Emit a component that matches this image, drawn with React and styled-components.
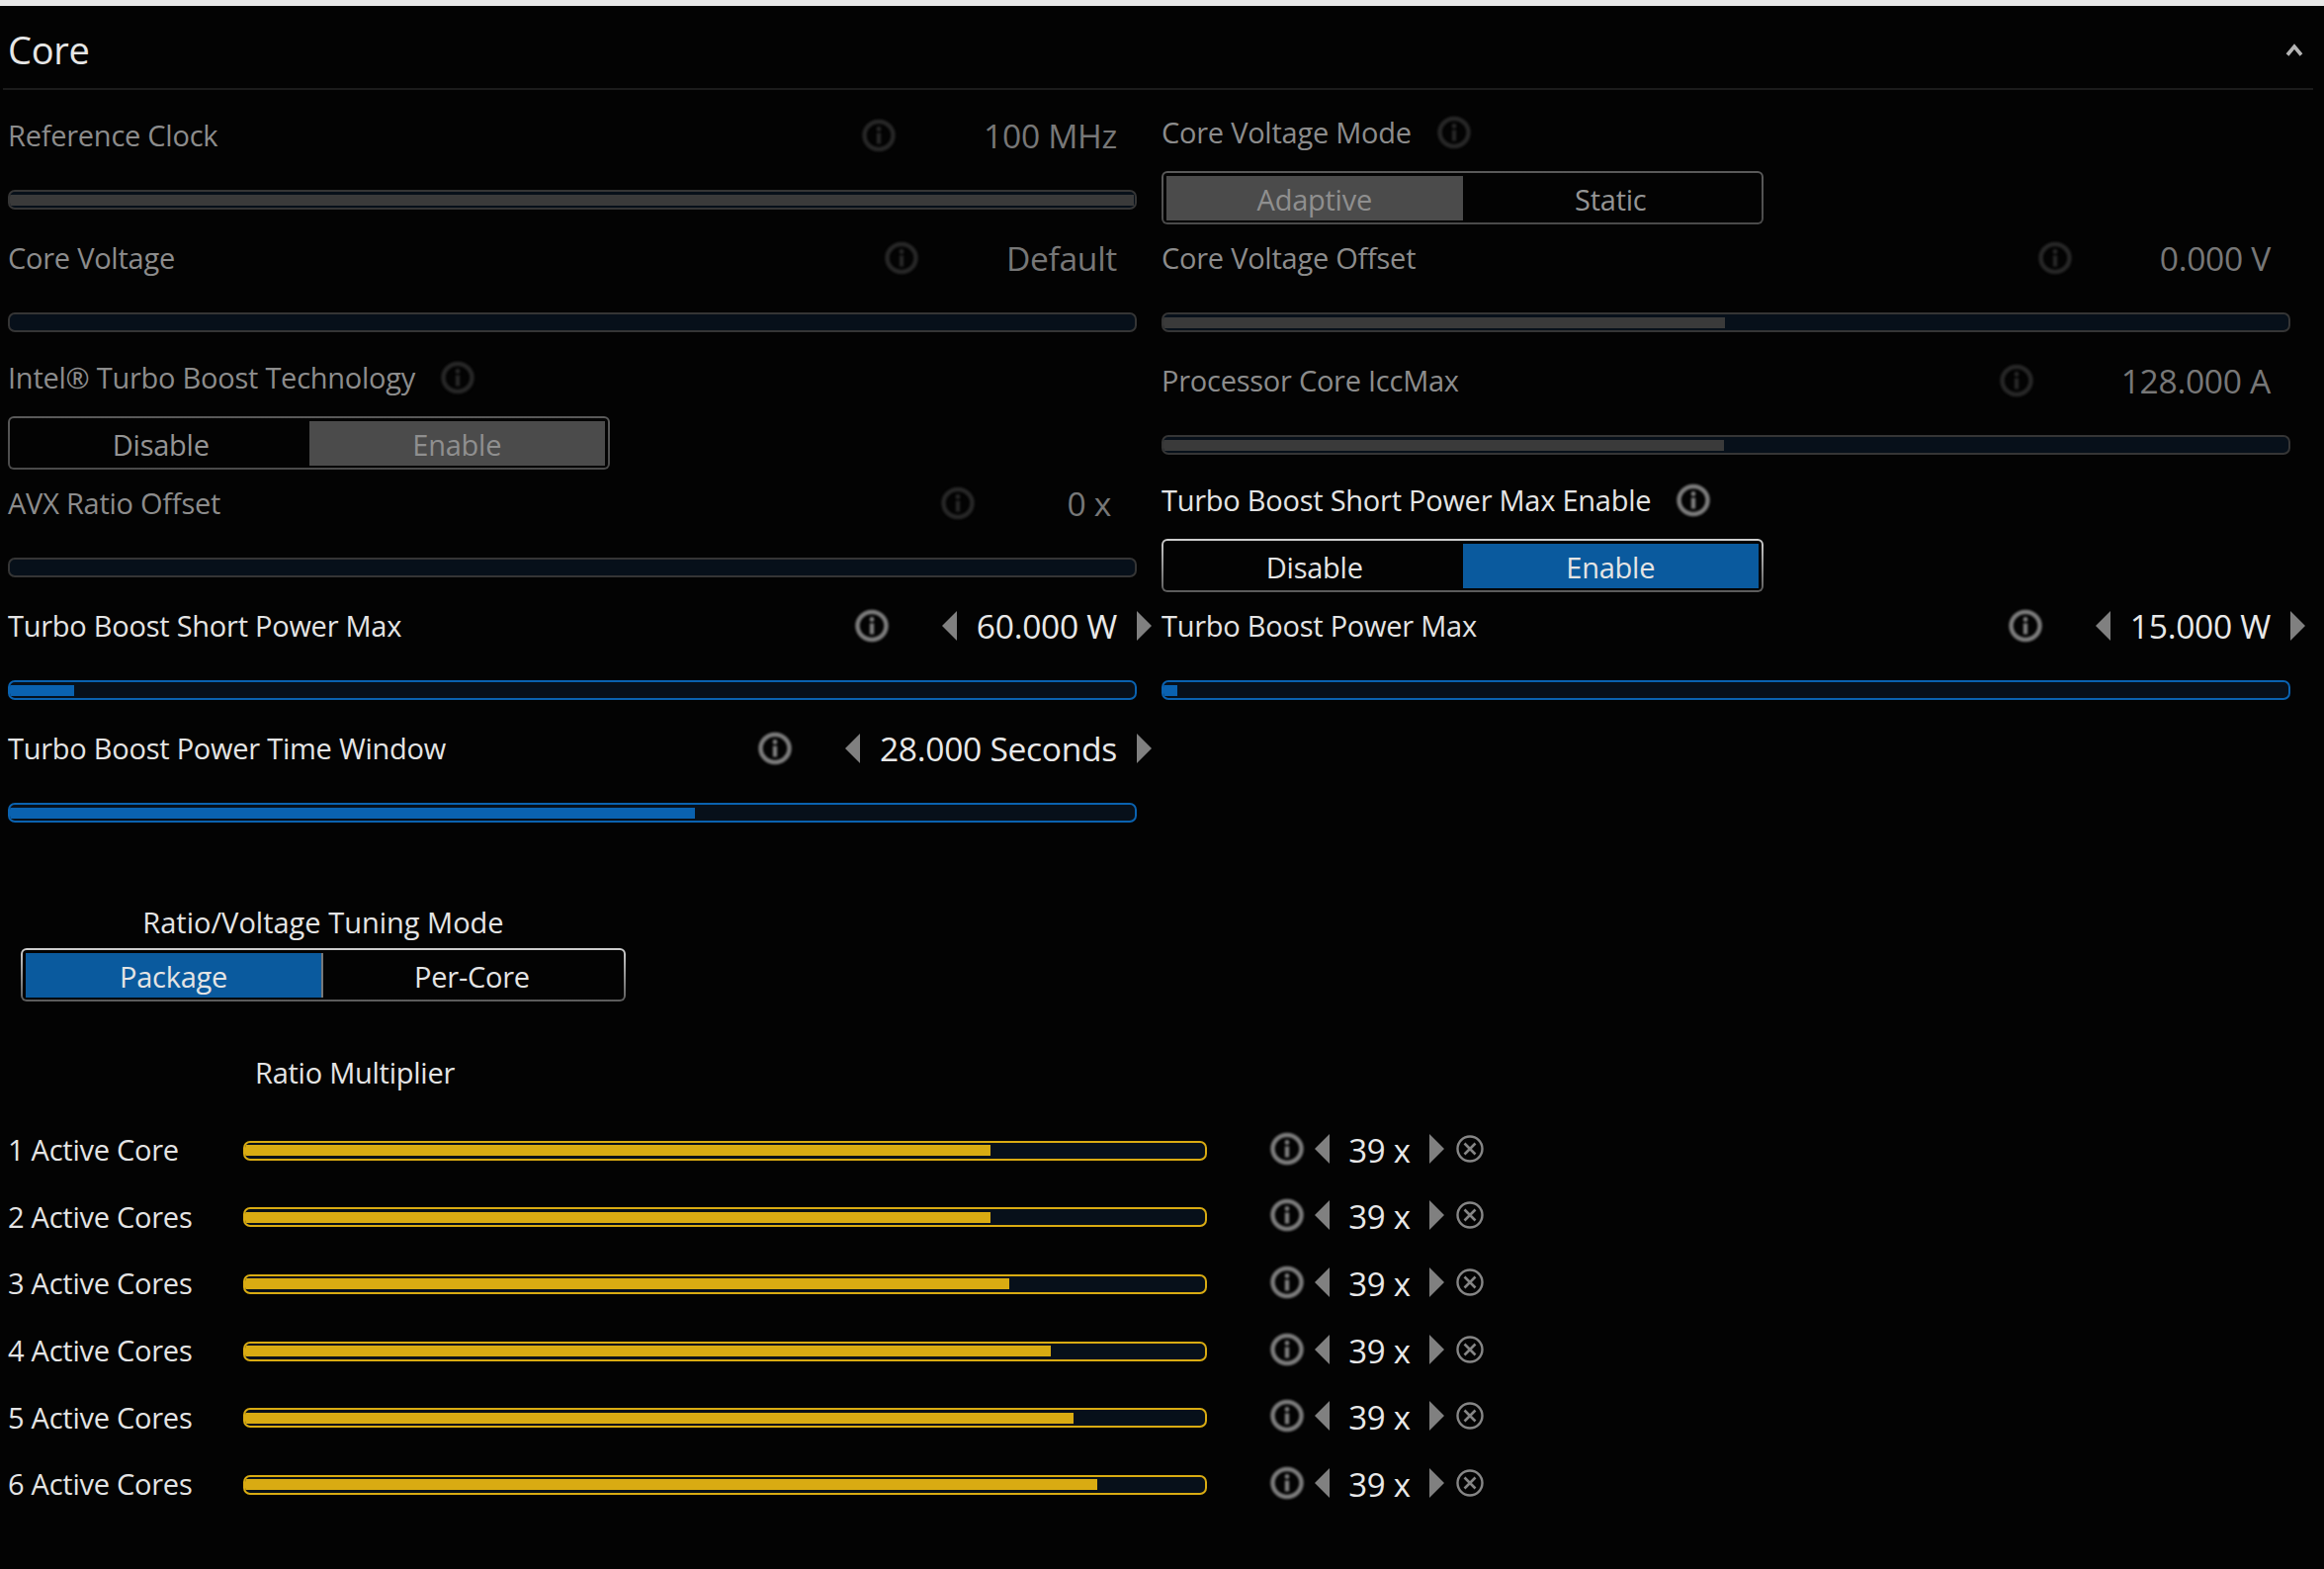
import React from 'react';
import styled, { createGlobalStyle } from 'styled-components';

const GlobalStyle = createGlobalStyle`
  html, body {
    margin: 0;
    padding: 0;
    background: #030303;
  }
  body {
    font-family: "Open Sans", "Noto Sans", "Liberation Sans", sans-serif;
    letter-spacing: -0.25px;
  }
`

const Page = styled.div`
  width: 2351px;
  height: 1587px;
  overflow: hidden;
  background: #030303;
  border-top: 6px solid #e8e8e8;
  box-sizing: border-box;
`
const PanelHeader = styled.div`
  display: flex;
  align-items: center;
  justify-content: space-between;
  height: 85px;
  margin: 0 11px 0 3px;
  padding: 4px 10px 0 5px;
  border-bottom: 2px solid #1b1b1b;
  box-sizing: border-box;
`
const Title = styled.h2`
  margin: 0;
  font-size: 38px;
  font-weight: 400;
  letter-spacing: -0.3px;
  color: #e6e6e6;
`
const Chevron = styled.svg`
  display: block;
  filter: blur(0.5px);
`
const SettingsGrid = styled.div`
  display: grid;
  grid-template-columns: 1142px 1142px;
  grid-auto-rows: 124px;
  column-gap: 25px;
  margin: 14px 0 0 8px;
`
const Cell = styled.div`
  display: flex;
  flex-direction: column;
  min-width: 0;
`
const CellHead = styled.div`
  display: flex;
  align-items: center;
  flex: 0 0 ${p => (p.$toggle ? '57px' : '63px')};
  margin-right: ${p => (p.$toggle ? '0' : '-15px')};
`
const Label = styled.span`
  font-size: 29px;
  color: ${p => (p.$on ? '#e4e4e4' : '#8c8c8c')};
  white-space: nowrap;
`
const Spacer = styled.div`
  flex: 1;
`
const InfoWrap = styled.span`
  display: flex;
  margin-left: ${p => p.$gap || 0}px;
  filter: blur(0.8px);
`
const Stepper = styled.div`
  display: flex;
  align-items: center;
  margin-left: 54px;
`
const Value = styled.span`
  padding: 0 ${p => p.$trail || 20}px 0 ${p => p.$lead || 20}px;
  font-size: 33.6px;
  letter-spacing: -0.3px;
  color: ${p => (p.$on ? '#e8e8e8' : '#777777')};
  white-space: nowrap;
`
const Arrow = styled.span`
  display: block;
  width: 0;
  height: 0;
  border-top: 15px solid transparent;
  border-bottom: 15px solid transparent;
  ${p => (p.$dir === 'left'
    ? 'border-right: 15px solid #808080;'
    : 'border-left: 15px solid #808080;')}
  visibility: ${p => (p.$hidden ? 'hidden' : 'visible')};
`
const Track = styled.div`
  height: 20px;
  padding: 2.5px 0;
  border: 2.5px solid ${p => p.$color};
  border-radius: 7px;
  background: #07101a;
  box-sizing: border-box;
  overflow: hidden;
`
const SliderTrack = styled(Track)`
  margin-top: 24px;
`
const Fill = styled.div`
  height: 100%;
  background: ${p => p.$color};
`
const ToggleBox = styled.div`
  display: grid;
  grid-template-columns: 1fr 1fr;
  width: ${p => p.$width || 609}px;
  height: 54px;
  padding: 3px 3px 2px;
  border: 2.5px solid transparent;
  border-radius: 6px;
  background:
    linear-gradient(#030303, #030303) padding-box,
    linear-gradient(${p => (p.$on ? '#cfcfcf, #5a5a5a' : '#5a5a5a, #4a4a4a')}) border-box;
  box-sizing: border-box;
`
const CellToggle = styled(ToggleBox)`
  margin-top: 11px;
`
const Segment = styled.div`
  display: flex;
  align-items: center;
  justify-content: center;
  padding-top: 2px;
  font-size: 29px;
  background: ${p => (p.$selected ? (p.$on ? '#0a5a9e' : '#4b4b4b') : 'transparent')};
  color: ${p => (p.$on ? '#e4e4e4' : (p.$selected ? '#8f8f8f' : '#949494'))};
  ${p => p.$divider && 'border-right: 2px solid #777777;'}
`
const TuningBlock = styled.div`
  width: 612px;
  margin: 64px 0 0 21px;
`
const TuningTitle = styled.div`
  height: 40px;
  margin-bottom: 6px;
  font-size: 29px;
  line-height: 40px;
  letter-spacing: 0;
  text-align: center;
  color: #e4e4e4;
`
const RatioTitle = styled.div`
  height: 40px;
  margin: 52px 0 25px 258px;
  font-size: 29px;
  line-height: 40px;
  color: #e4e4e4;
`
const RatioList = styled.div`
  display: grid;
  grid-auto-rows: 67.6px;
  padding-left: 8px;
`
const RatioRow = styled.div`
  display: grid;
  grid-template-columns: 238px 975px auto;
  align-items: center;
  justify-content: start;
`
const RatioLabel = styled.span`
  font-size: 29px;
  color: #e4e4e4;
  padding-bottom: 2px;
`
const RatioControls = styled.div`
  display: flex;
  align-items: center;
  margin-left: 64px;
  padding-bottom: 4px;
`
const RatioValue = styled.span`
  width: 101px;
  padding-top: 3px;
  font-size: 33px;
  text-align: center;
  color: #e8e8e8;
`
const ClearIcon = styled.svg`
  display: block;
  margin-left: 12px;
`
const LeftArrowGap = styled.span`
  display: flex;
  margin-left: 11px;
`

const BLUE = '#0a62b0'
const YELLOW = '#d9ab12'

function InfoIcon({ on, gap }) {
  const color = on ? '#7c7c7c' : '#272727'
  return (
    <InfoWrap $gap={gap}>
      <svg width="34" height="34" viewBox="0 0 34 34" fill="none">
        <ellipse cx="17" cy="17" rx="14.5" ry="14" stroke={color} strokeWidth="4.5" />
        <circle cx="17" cy="10.5" r="2.4" fill={color} />
        <rect x="14.8" y="14.5" width="4.4" height="11" fill={color} />
      </svg>
    </InfoWrap>
  )
}

function Slider({ label, value, on, fill, lead, trail }) {
  return (
    <Cell>
      <CellHead>
        <Label $on={on}>{label}</Label>
        <Spacer />
        <InfoIcon on={on} />
        <Stepper>
          <Arrow $dir="left" $hidden={!on} />
          <Value $on={on} $lead={lead} $trail={trail}>{value}</Value>
          <Arrow $dir="right" $hidden={!on} />
        </Stepper>
      </CellHead>
      <SliderTrack $color={on ? BLUE : '#353535'}>
        <Fill $color={on ? BLUE : '#3a3a3a'} style={{ width: `${fill}px` }} />
      </SliderTrack>
    </Cell>
  )
}

function Toggle({ label, options, selected, on }) {
  return (
    <Cell>
      <CellHead $toggle>
        <Label $on={on}>{label}</Label>
        <InfoIcon on={on} gap={26} />
      </CellHead>
      <CellToggle $on={on}>
        {options.map((option, i) => (
          <Segment key={option} $on={on} $selected={i === selected}>{option}</Segment>
        ))}
      </CellToggle>
    </Cell>
  )
}

const ratioRows = [
  { label: '1 Active Core', fill: 754 },
  { label: '2 Active Cores', fill: 754 },
  { label: '3 Active Cores', fill: 773 },
  { label: '4 Active Cores', fill: 815 },
  { label: '5 Active Cores', fill: 838 },
  { label: '6 Active Cores', fill: 862 },
]

function App() {
  return (
    <Page>
      <GlobalStyle />
      <PanelHeader>
        <Title>Core</Title>
        <Chevron width="18" height="14" viewBox="0 0 18 14" fill="none">
          <path d="M2 12.5 L9 4 L16 12.5" stroke="#b4b4b4" strokeWidth="3.6" />
        </Chevron>
      </PanelHeader>

      <SettingsGrid>
        <Slider label="Reference Clock" value="100 MHz" fill={1137} />
        <Toggle label="Core Voltage Mode" options={['Adaptive', 'Static']} selected={0} />

        <Slider label="Core Voltage" value="Default" fill={0} />
        <Slider label="Core Voltage Offset" value="0.000 V" fill={568} />

        <Toggle label="Intel® Turbo Boost Technology" options={['Disable', 'Enable']} selected={1} />
        <Slider label="Processor Core IccMax" value="128.000 A" fill={567} />

        <Slider label="AVX Ratio Offset" value="0 x" fill={0} lead={24} trail={26} />
        <Toggle label="Turbo Boost Short Power Max Enable" options={['Disable', 'Enable']} selected={1} on />

        <Slider label="Turbo Boost Short Power Max" value="60.000 W" fill={65} on />
        <Slider label="Turbo Boost Power Max" value="15.000 W" fill={14} on />

        <Slider label="Turbo Boost Power Time Window" value="28.000 Seconds" fill={693} on />
      </SettingsGrid>

      <TuningBlock>
        <TuningTitle>Ratio/Voltage Tuning Mode</TuningTitle>
        <ToggleBox $on $width={612}>
          <Segment $on $selected $divider>Package</Segment>
          <Segment $on>Per-Core</Segment>
        </ToggleBox>
      </TuningBlock>

      <RatioTitle>Ratio Multiplier</RatioTitle>
      <RatioList>
        {ratioRows.map(row => (
          <RatioRow key={row.label}>
            <RatioLabel>{row.label}</RatioLabel>
            <Track $color={YELLOW}>
              <Fill $color={YELLOW} style={{ width: `${row.fill}px` }} />
            </Track>
            <RatioControls>
              <InfoIcon on />
              <LeftArrowGap><Arrow $dir="left" /></LeftArrowGap>
              <RatioValue>39 x</RatioValue>
              <Arrow $dir="right" />
              <ClearIcon width="28" height="28" viewBox="0 0 28 28" fill="none">
                <circle cx="14" cy="14" r="12.5" stroke="#858585" strokeWidth="2.4" />
                <path d="M8.5 8.5 L19.5 19.5 M19.5 8.5 L8.5 19.5" stroke="#858585" strokeWidth="2.6" />
              </ClearIcon>
            </RatioControls>
          </RatioRow>
        ))}
      </RatioList>
    </Page>
  )
}

export default App
